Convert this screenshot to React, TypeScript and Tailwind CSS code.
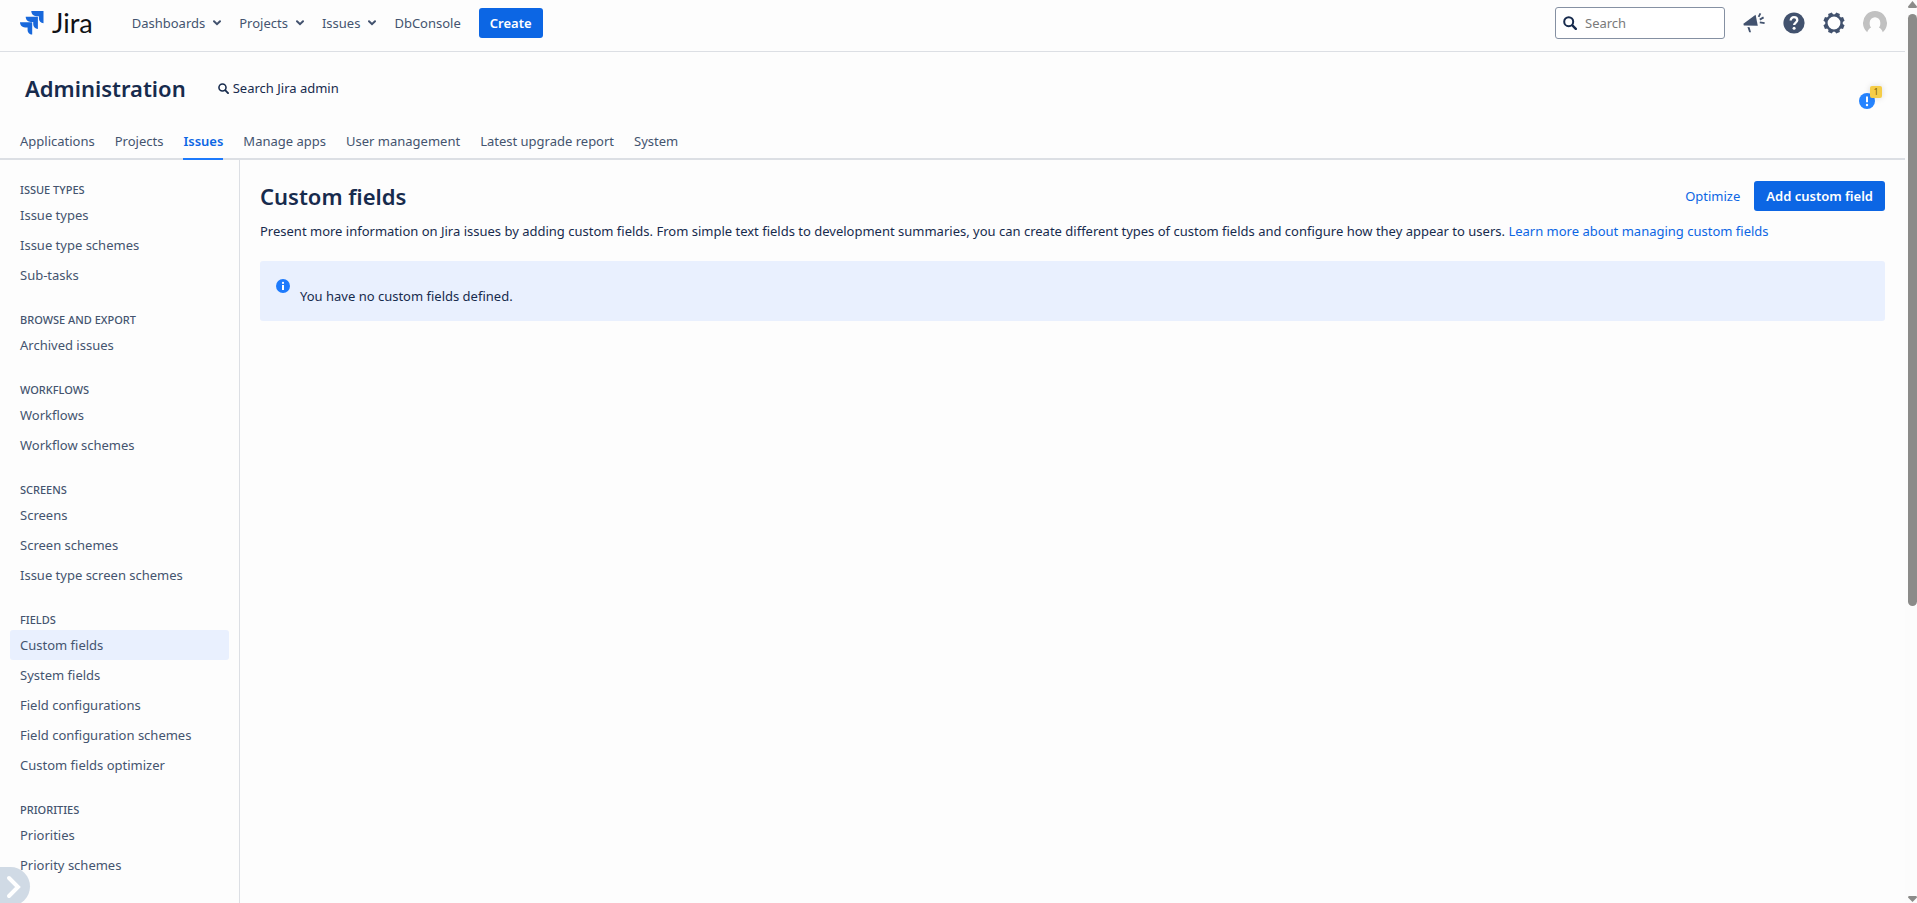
import { clsx } from 'clsx'

const menus = [
  { label: 'Dashboards', dropdown: true },
  { label: 'Projects', dropdown: true },
  { label: 'Issues', dropdown: true },
  { label: 'DbConsole', dropdown: false },
]

const tabs = [
  'Applications',
  'Projects',
  'Issues',
  'Manage apps',
  'User management',
  'Latest upgrade report',
  'System',
]

const sections = [
  { title: 'Issue types', items: ['Issue types', 'Issue type schemes', 'Sub-tasks'] },
  { title: 'Browse and export', items: ['Archived issues'] },
  { title: 'Workflows', items: ['Workflows', 'Workflow schemes'] },
  { title: 'Screens', items: ['Screens', 'Screen schemes', 'Issue type screen schemes'] },
  {
    title: 'Fields',
    items: [
      'Custom fields',
      'System fields',
      'Field configurations',
      'Field configuration schemes',
      'Custom fields optimizer',
    ],
  },
  { title: 'Priorities', items: ['Priorities', 'Priority schemes'] },
]

function JiraMark() {
  return (
    <svg width="24" height="24" viewBox="0 0 24 24" fill="#1868db" aria-hidden="true">
      <path d="M11.3 0H23.5V12.2C20.8 12.2 18.9 10.2 18.9 7.6V5.2H16.4C13.6 5.2 11.3 2.9 11.3 0Z" />
      <path d="M5.7 5.7H17.9V17.9C15.2 17.9 13.2 15.9 13.2 13.3V10.9H10.7C7.9 10.9 5.7 8.5 5.7 5.7Z" />
      <path d="M0 11.3H12.2V23.5C9.5 23.5 7.6 21.4 7.6 18.9V16.5H5.1C2.2 16.5 0 14.2 0 11.3Z" />
    </svg>
  )
}

function Chevron() {
  return (
    <svg width="8" height="6" viewBox="0 0 8 6" fill="none" stroke="#42526e" strokeWidth="2" strokeLinecap="round" aria-hidden="true">
      <path d="M1 1.2 4 4.2 7 1.2" />
    </svg>
  )
}

function SearchIcon({ size, color }: { size: number; color: string }) {
  return (
    <svg width={size} height={size} viewBox="0 0 14 14" fill="none" stroke={color} strokeLinecap="round" aria-hidden="true">
      <circle cx="5.7" cy="5.7" r="4.5" strokeWidth="2" />
      <path d="M9.4 9.4 12.8 12.8" strokeWidth="2.4" />
    </svg>
  )
}

function FeedbackIcon() {
  return (
    <svg width="22" height="22" viewBox="0 0 22 22" aria-hidden="true">
      <path d="M12.6 2.8 14.8 13.8 0.8 13.4 0.4 11.8Z" fill="#42526e" />
      <path d="M4.4 15 6.6 15.2 8 20.2H6.2Z" fill="#42526e" />
      <path d="M15.6 4.8 17.4 1.4M16.8 7.6 20.6 5.4M16.8 10.4 21.6 11.2" stroke="#42526e" strokeWidth="1.8" fill="none" />
    </svg>
  )
}

function HelpIcon() {
  return (
    <svg width="22" height="22" viewBox="0 0 22 22" fill="none" aria-hidden="true">
      <circle cx="11" cy="11" r="10.6" fill="#42526e" />
      <path d="M7.7 8.6C7.7 6.4 9.1 5.2 11 5.2S14.3 6.5 14.3 8.3C14.3 10.5 11.1 10.7 11.1 13.1" stroke="#fff" strokeWidth="2.3" />
      <circle cx="11.1" cy="16.2" r="1.5" fill="#fff" />
    </svg>
  )
}

function GearIcon() {
  return (
    <svg width="22" height="22" viewBox="0 0 22 22" fill="none" aria-hidden="true">
      <g fill="#42526e">
        {[22.5, 67.5, 112.5, 157.5, 202.5, 247.5, 292.5, 337.5].map((deg) => (
          <path key={deg} d="M9 0.4H13L13.8 4.6H8.2Z" transform={`rotate(${deg} 11 11)`} />
        ))}
      </g>
      <circle cx="11" cy="11" r="7.6" stroke="#42526e" strokeWidth="2.4" fill="#fff" />
    </svg>
  )
}

function Avatar() {
  return (
    <svg width="24" height="24" viewBox="0 0 24 24" aria-hidden="true">
      <path
        d="M4.2 21.2A12 12 0 1 1 19.8 21.2C19.2 19.2 17.7 17.6 15.9 16.6A5.3 5.3 0 0 0 17.3 12.6V11.6A5.3 5.3 0 0 0 6.7 11.6V12.6A5.3 5.3 0 0 0 8.1 16.6C6.3 17.6 4.8 19.2 4.2 21.2Z"
        fill="#c1c1c1"
      />
    </svg>
  )
}

function TopBar() {
  return (
    <header className="flex items-start justify-between border-b border-[#dcdfe4] pt-[7px] pr-[18px] pb-3 pl-5">
      <div className="flex items-center">
        <a href="#home" className="mr-[39px] flex h-8 items-center gap-2" aria-label="Jira">
          <JiraMark />
          <span className="font-['Lato'] text-[27px] leading-8 text-[#101214]">Jira</span>
        </a>
        <nav className="flex items-center gap-[18px]">
          {menus.map((menu) =>
            menu.dropdown ? (
              <button key={menu.label} type="button" className="flex items-center gap-2">
                {menu.label}
                <Chevron />
              </button>
            ) : (
              <a key={menu.label} href="#dbconsole">{menu.label}</a>
            ),
          )}
          <button type="button" className="h-[30px] rounded-[3px] bg-[#0c66e4] px-[11px] font-semibold text-white">
            Create
          </button>
        </nav>
      </div>
      <div className="flex items-center gap-[18px]">
        <label className="flex h-8 w-[170px] items-center gap-2 rounded-[3px] border border-[#8590a2] bg-white px-[7px]">
          <SearchIcon size={14} color="#172b4d" />
          <input type="text" placeholder="Search" aria-label="Search" className="min-w-0 flex-1 outline-none placeholder:text-[#7a7a7a]" />
        </label>
        <button type="button" aria-label="Feedback"><FeedbackIcon /></button>
        <button type="button" aria-label="Help"><HelpIcon /></button>
        <button type="button" aria-label="Administration"><GearIcon /></button>
        <button type="button" aria-label="User profile"><Avatar /></button>
      </div>
    </header>
  )
}

function AdminHeader() {
  return (
    <div className="border-b-2 border-[#dcdfe4] px-5 pt-5">
      <div className="flex items-start justify-between">
        <div className="flex items-center gap-8 pl-[5px]">
          <h1 className="text-[22px] leading-8 font-semibold text-[#172b4d]">Administration</h1>
          <a href="#search" className="flex items-center gap-1 text-[#172b4d]">
            <SearchIcon size={11} color="#172b4d" />
            Search Jira admin
          </a>
        </div>
        <button type="button" aria-label="Notifications" className="relative mt-[21px] mr-[10px] h-4 w-4">
          <svg width="16" height="16" viewBox="0 0 16 16" aria-hidden="true">
            <circle cx="8" cy="8" r="8" fill="#2684ff" />
            <path d="M8 3.4V9.2" stroke="#fff" strokeWidth="2" />
            <circle cx="8" cy="12" r="1.2" fill="#fff" />
          </svg>
          <span className="absolute -top-[7px] left-[11px] flex h-3 w-3 items-center justify-center rounded-xs bg-[#f5cd47] text-[9px] leading-3 text-[#7f5f01] shadow-[0_0_6px_rgba(0,0,0,0.15)]">
            1
          </span>
        </button>
      </div>
      <nav className="-mb-0.5 flex gap-5 pt-[13px]">
        {tabs.map((tab) => (
          <a
            key={tab}
            href="#tab"
            className={clsx(
              'border-b-2 pt-[9px] pb-[7px] leading-5',
              tab === 'Issues' ? 'border-[#1d7afc] font-semibold text-[#0c66e4]' : 'border-transparent',
            )}
          >
            {tab}
          </a>
        ))}
      </nav>
    </div>
  )
}

function Sidebar() {
  return (
    <nav className="flex w-60 shrink-0 flex-col gap-5 border-r border-[#dcdfe4] px-[10px] pt-5">
      {sections.map((section) => (
        <div key={section.title}>
          <h2 className="px-[10px] text-[11px] leading-5 font-medium uppercase">{section.title}</h2>
          <ul>
            {section.items.map((item) => (
              <li key={item}>
                <a
                  href="#item"
                  className={clsx('block rounded-[3px] px-[10px] leading-[30px]', item === 'Custom fields' && 'bg-[#e9f0fe]')}
                >
                  {item}
                </a>
              </li>
            ))}
          </ul>
        </div>
      ))}
    </nav>
  )
}

function CustomFields() {
  return (
    <main className="min-w-0 flex-1 p-5 text-[#172b4d]">
      <div className="flex items-center justify-between">
        <h2 className="text-[22px] leading-8 font-semibold">Custom fields</h2>
        <div className="flex items-center gap-[14px]">
          <a href="#optimize" className="text-[#0c66e4]">Optimize</a>
          <button type="button" className="h-[30px] rounded-[3px] bg-[#0c66e4] px-3 font-semibold text-white">
            Add custom field
          </button>
        </div>
      </div>
      <p className="mt-[9px] leading-5">
        Present more information on Jira issues by adding custom fields. From simple text fields to development
        summaries, you can create different types of custom fields and configure how they appear to users.{' '}
        <a href="#learn" className="text-[#0c66e4]">Learn more about managing custom fields</a>
      </p>
      <div className="mt-5 flex items-start gap-[10px] rounded-[3px] bg-[#e9f0fe] px-4 pt-[18px] pb-[15px]">
        <svg width="14" height="14" viewBox="0 0 14 14" aria-hidden="true">
          <circle cx="7" cy="7" r="7" fill="#1d7afc" />
          <circle cx="7" cy="3.9" r="1.1" fill="#fff" />
          <path d="M7 6V11" stroke="#fff" strokeWidth="2" />
        </svg>
        <p className="pt-[7px] leading-5">You have no custom fields defined.</p>
      </div>
    </main>
  )
}

function ScrollTrack() {
  return (
    <div className="flex w-3 shrink-0 flex-col items-end bg-[#fcfcfc]" aria-hidden="true">
      <svg width="9" height="14" viewBox="0 0 9 14" fill="#8b8b89">
        <path d="M4.5 1 9 6.5Q9 8 8 8H1Q0 8 0 6.5Z" />
      </svg>
      <div className="h-[592px] w-[9px] rounded-full bg-[#8b8b89]" />
      <svg width="9" height="14" viewBox="0 0 9 14" fill="#8b8b89" className="mt-auto">
        <path d="M4.5 13 9 8.5Q9 7 8 7H1Q0 7 0 8.5Z" />
      </svg>
    </div>
  )
}

export default function App() {
  return (
    <div className="relative flex h-screen overflow-hidden bg-[#fdfdfd] font-['Noto_Sans',sans-serif] text-[13px] leading-5 text-[#44546f]">
      <div className="flex min-w-0 flex-1 flex-col">
        <TopBar />
        <AdminHeader />
        <div className="flex flex-1">
          <Sidebar />
          <CustomFields />
        </div>
      </div>
      <ScrollTrack />
      <button
        type="button"
        aria-label="Expand panel"
        className="absolute -bottom-[3px] left-0 flex h-[39px] w-[30px] items-center rounded-r-full bg-[#d0dae5] pl-1.5"
      >
        <svg width="16" height="24" viewBox="0 0 16 24" fill="none" stroke="#fff" strokeWidth="4" strokeLinecap="round" aria-hidden="true">
          <path d="M3 3 12 12 3 21" />
        </svg>
      </button>
    </div>
  )
}
